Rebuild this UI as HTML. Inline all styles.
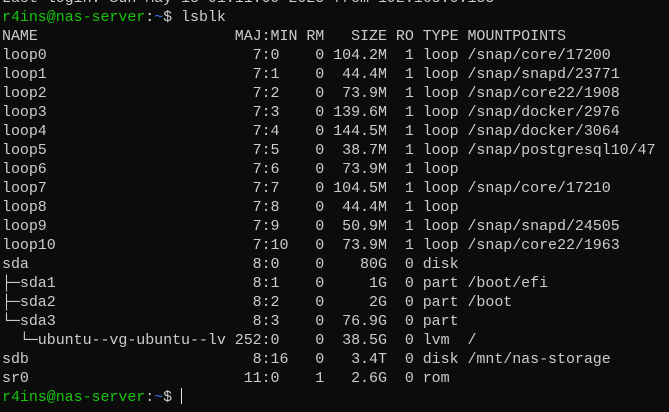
<!DOCTYPE html>
<html><head><meta charset="utf-8"><style>
html,body{margin:0;padding:0;background:#0c0c0c;width:669px;height:412px;overflow:hidden}
pre{position:absolute;left:2px;top:-11px;margin:0;font-family:"Liberation Mono","DejaVu Sans Mono",monospace;font-size:15px;line-height:19px;color:#cccccc;letter-spacing:-0.05px;white-space:pre}
.g{color:#16c60c}.b{color:#3b78ff}
.cur{display:inline-block;width:1px;height:16px;background:#e0e0e0;vertical-align:-3px;margin-left:0px}
</style></head><body><pre>Last login: Sun May 18 01:11:09 2025 from 192.168.0.185
<span class="g">r4ins@nas-server</span>:<span class="b">~</span>$ lsblk
NAME                      MAJ:MIN RM   SIZE RO TYPE MOUNTPOINTS
loop0                       7:0    0 104.2M  1 loop /snap/core/17200
loop1                       7:1    0  44.4M  1 loop /snap/snapd/23771
loop2                       7:2    0  73.9M  1 loop /snap/core22/1908
loop3                       7:3    0 139.6M  1 loop /snap/docker/2976
loop4                       7:4    0 144.5M  1 loop /snap/docker/3064
loop5                       7:5    0  38.7M  1 loop /snap/postgresql10/47
loop6                       7:6    0  73.9M  1 loop
loop7                       7:7    0 104.5M  1 loop /snap/core/17210
loop8                       7:8    0  44.4M  1 loop
loop9                       7:9    0  50.9M  1 loop /snap/snapd/24505
loop10                      7:10   0  73.9M  1 loop /snap/core22/1963
sda                         8:0    0    80G  0 disk
├─sda1                      8:1    0     1G  0 part /boot/efi
├─sda2                      8:2    0     2G  0 part /boot
└─sda3                      8:3    0  76.9G  0 part
  └─ubuntu--vg-ubuntu--lv 252:0    0  38.5G  0 lvm  /
sdb                         8:16   0   3.4T  0 disk /mnt/nas-storage
sr0                        11:0    1   2.6G  0 rom
<span class="g">r4ins@nas-server</span>:<span class="b">~</span>$ <span class="cur"></span></pre></body></html>
